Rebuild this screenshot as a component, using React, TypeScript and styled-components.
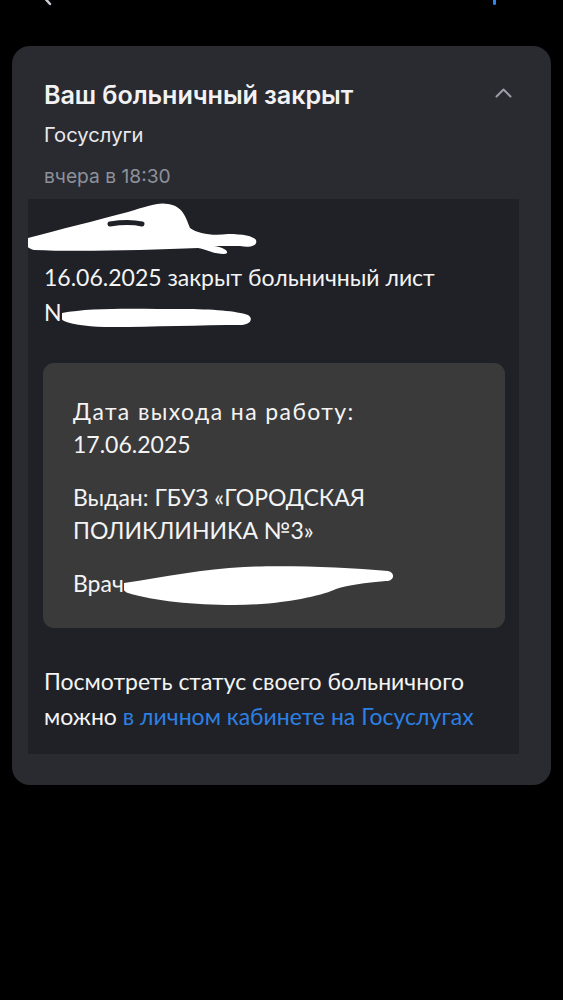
import React from 'react'
import styled, { createGlobalStyle } from 'styled-components'

const GlobalStyle = createGlobalStyle`
  html, body {
    margin: 0;
    padding: 0;
    background: #000;
  }
  body {
    font-family: Inter, "Noto Sans", sans-serif;
    color: #fff;
    -webkit-font-smoothing: antialiased;
  }
`

/**
 * Components styles
 */
const Screen = styled.div`
  min-height: 1000px;
  background: #000;
  overflow: hidden;
`

const TopBar = styled.div`
  height: 46px;
  display: flex;
  justify-content: space-between;
  align-items: flex-start;
  padding: 0 66px 0 40px;
`

const BarIcon = styled.svg`
  margin-top: -16px;
`

const Card = styled.section`
  margin: 0 12px;
  padding: 34px 32px 31px 16px;
  background: #2a2b30;
  border-radius: 18px;
`

const Head = styled.header`
  display: flex;
  justify-content: space-between;
  align-items: flex-start;
  padding: 0 7px 0 16px;
`

const HeadText = styled.div`
  display: flex;
  flex-direction: column;
`

const Title = styled.h2`
  margin: 0;
  font-size: 25.2px;
  line-height: 30px;
  font-weight: 600;
  color: #f2f2f4;
  letter-spacing: -0.1px;
`

const Sender = styled.div`
  margin-top: 13px;
  font-size: 20.2px;
  line-height: 24px;
  color: #e9e9ec;
`

const Time = styled.div`
  margin-top: 17px;
  font-size: 19.2px;
  line-height: 24px;
  color: #8d919b;
`

const Collapse = styled.button`
  margin-top: 8px;
  padding: 0;
  border: 0;
  background: none;
  display: flex;
`

const Body = styled.div`
  margin-top: 11px;
  padding: 1px 0 20px;
  background: #202127;
  font-family: Lato, "Open Sans", sans-serif;
  font-size: 23px;
  color: #f4f4f4;
`

const Scribble = styled.svg<{ $inline?: boolean }>`
  display: ${(p) => (p.$inline ? 'inline-block' : 'block')};
  vertical-align: middle;
  margin: ${(p) => (p.$inline ? '-16px 0' : '0')};
`

const Text = styled.p`
  margin: 4px 0 0;
  padding: 0 16px;
  line-height: 35px;
`

const Details = styled.div`
  margin: 33px 14px 0 15px;
  padding: 32px 30px 28px;
  background: #3a3a3b;
  border-radius: 11px;
  display: flex;
  flex-direction: column;
  gap: 20px;
`

const Detail = styled.p`
  margin: 0;
  line-height: 33px;
`

const Label = styled.span`
  letter-spacing: 1.4px;
`

const Footer = styled(Text)`
  margin-top: 36px;
`

const Link = styled.a`
  color: #2d80e3;
  text-decoration: none;
`

export default function App() {
  return (
    <>
      <GlobalStyle />
      <Screen>
        <TopBar>
          <BarIcon width="12" height="22" viewBox="0 0 12 22">
            <path d="M10 2 L2 11 L10 20" fill="none" stroke="#c9ccd3" strokeWidth="2.5" strokeLinecap="round" />
          </BarIcon>
          <BarIcon width="4" height="22" viewBox="0 0 4 22">
            <rect x="0" y="0" width="3" height="21" rx="1.5" fill="#2f86f0" />
          </BarIcon>
        </TopBar>
        <Card>
          <Head>
            <HeadText>
              <Title>Ваш больничный закрыт</Title>
              <Sender>Госуслуги</Sender>
              <Time>вчера в 18:30</Time>
            </HeadText>
            <Collapse aria-label="Свернуть">
              <svg width="17" height="10" viewBox="0 0 17 10">
                <path d="M1.5 8.5 L8.5 1.5 L15.5 8.5" fill="none" stroke="#9b9ea6" strokeWidth="2" strokeLinecap="round" strokeLinejoin="round" />
              </svg>
            </Collapse>
          </Head>
          <Body>
            <Scribble width="240" height="56" viewBox="0 0 240 56">
              <path
                d="M0 38 C30 30 70 20 100 12 C120 6 130 2 140 4 C155 6 158 18 162 28 C170 34 185 36 200 34 C215 34 225 36 228 40 C230 46 222 48 212 46 C200 46 192 46 186 46 C200 48 202 54 196 54 C186 54 180 50 170 48 C120 50 50 52 6 50 C-4 48 -4 40 0 38 Z"
                fill="#fff"
              />
              <path d="M82 24 C95 22 105 22 114 24" fill="none" stroke="#202127" strokeWidth="5" strokeLinecap="round" />
            </Scribble>
            <Text>
              16.06.2025 закрыт больничный лист
              <br />
              N
              <Scribble $inline width="192" height="28" viewBox="0 0 192 28">
                <path
                  d="M0 12 C30 6 80 8 120 8 C150 8 175 10 186 14 C192 18 188 24 178 24 C140 24 90 26 50 26 C30 26 12 24 2 20 C-2 18 -2 14 0 12 Z"
                  fill="#fff"
                />
              </Scribble>
            </Text>
            <Details>
              <Detail>
                <Label>Дата выхода на работу:</Label>
                <br />
                17.06.2025
              </Detail>
              <Detail>Выдан: ГБУЗ «ГОРОДСКАЯ ПОЛИКЛИНИКА №3»</Detail>
              <Detail>
                Врач
                <Scribble $inline width="272" height="46" viewBox="0 0 272 46">
                  <path
                    d="M0 20 C40 14 80 6 120 4 C160 2 220 4 264 8 C272 10 270 18 262 18 C240 20 225 22 212 26 C200 32 160 42 110 42 C70 42 30 38 4 30 C-2 28 -2 22 0 20 Z"
                    fill="#fff"
                  />
                </Scribble>
              </Detail>
            </Details>
            <Footer>
              Посмотреть статус своего больничного можно <Link href="#">в личном кабинете на Госуслугах</Link>
            </Footer>
          </Body>
        </Card>
      </Screen>
    </>
  )
}
